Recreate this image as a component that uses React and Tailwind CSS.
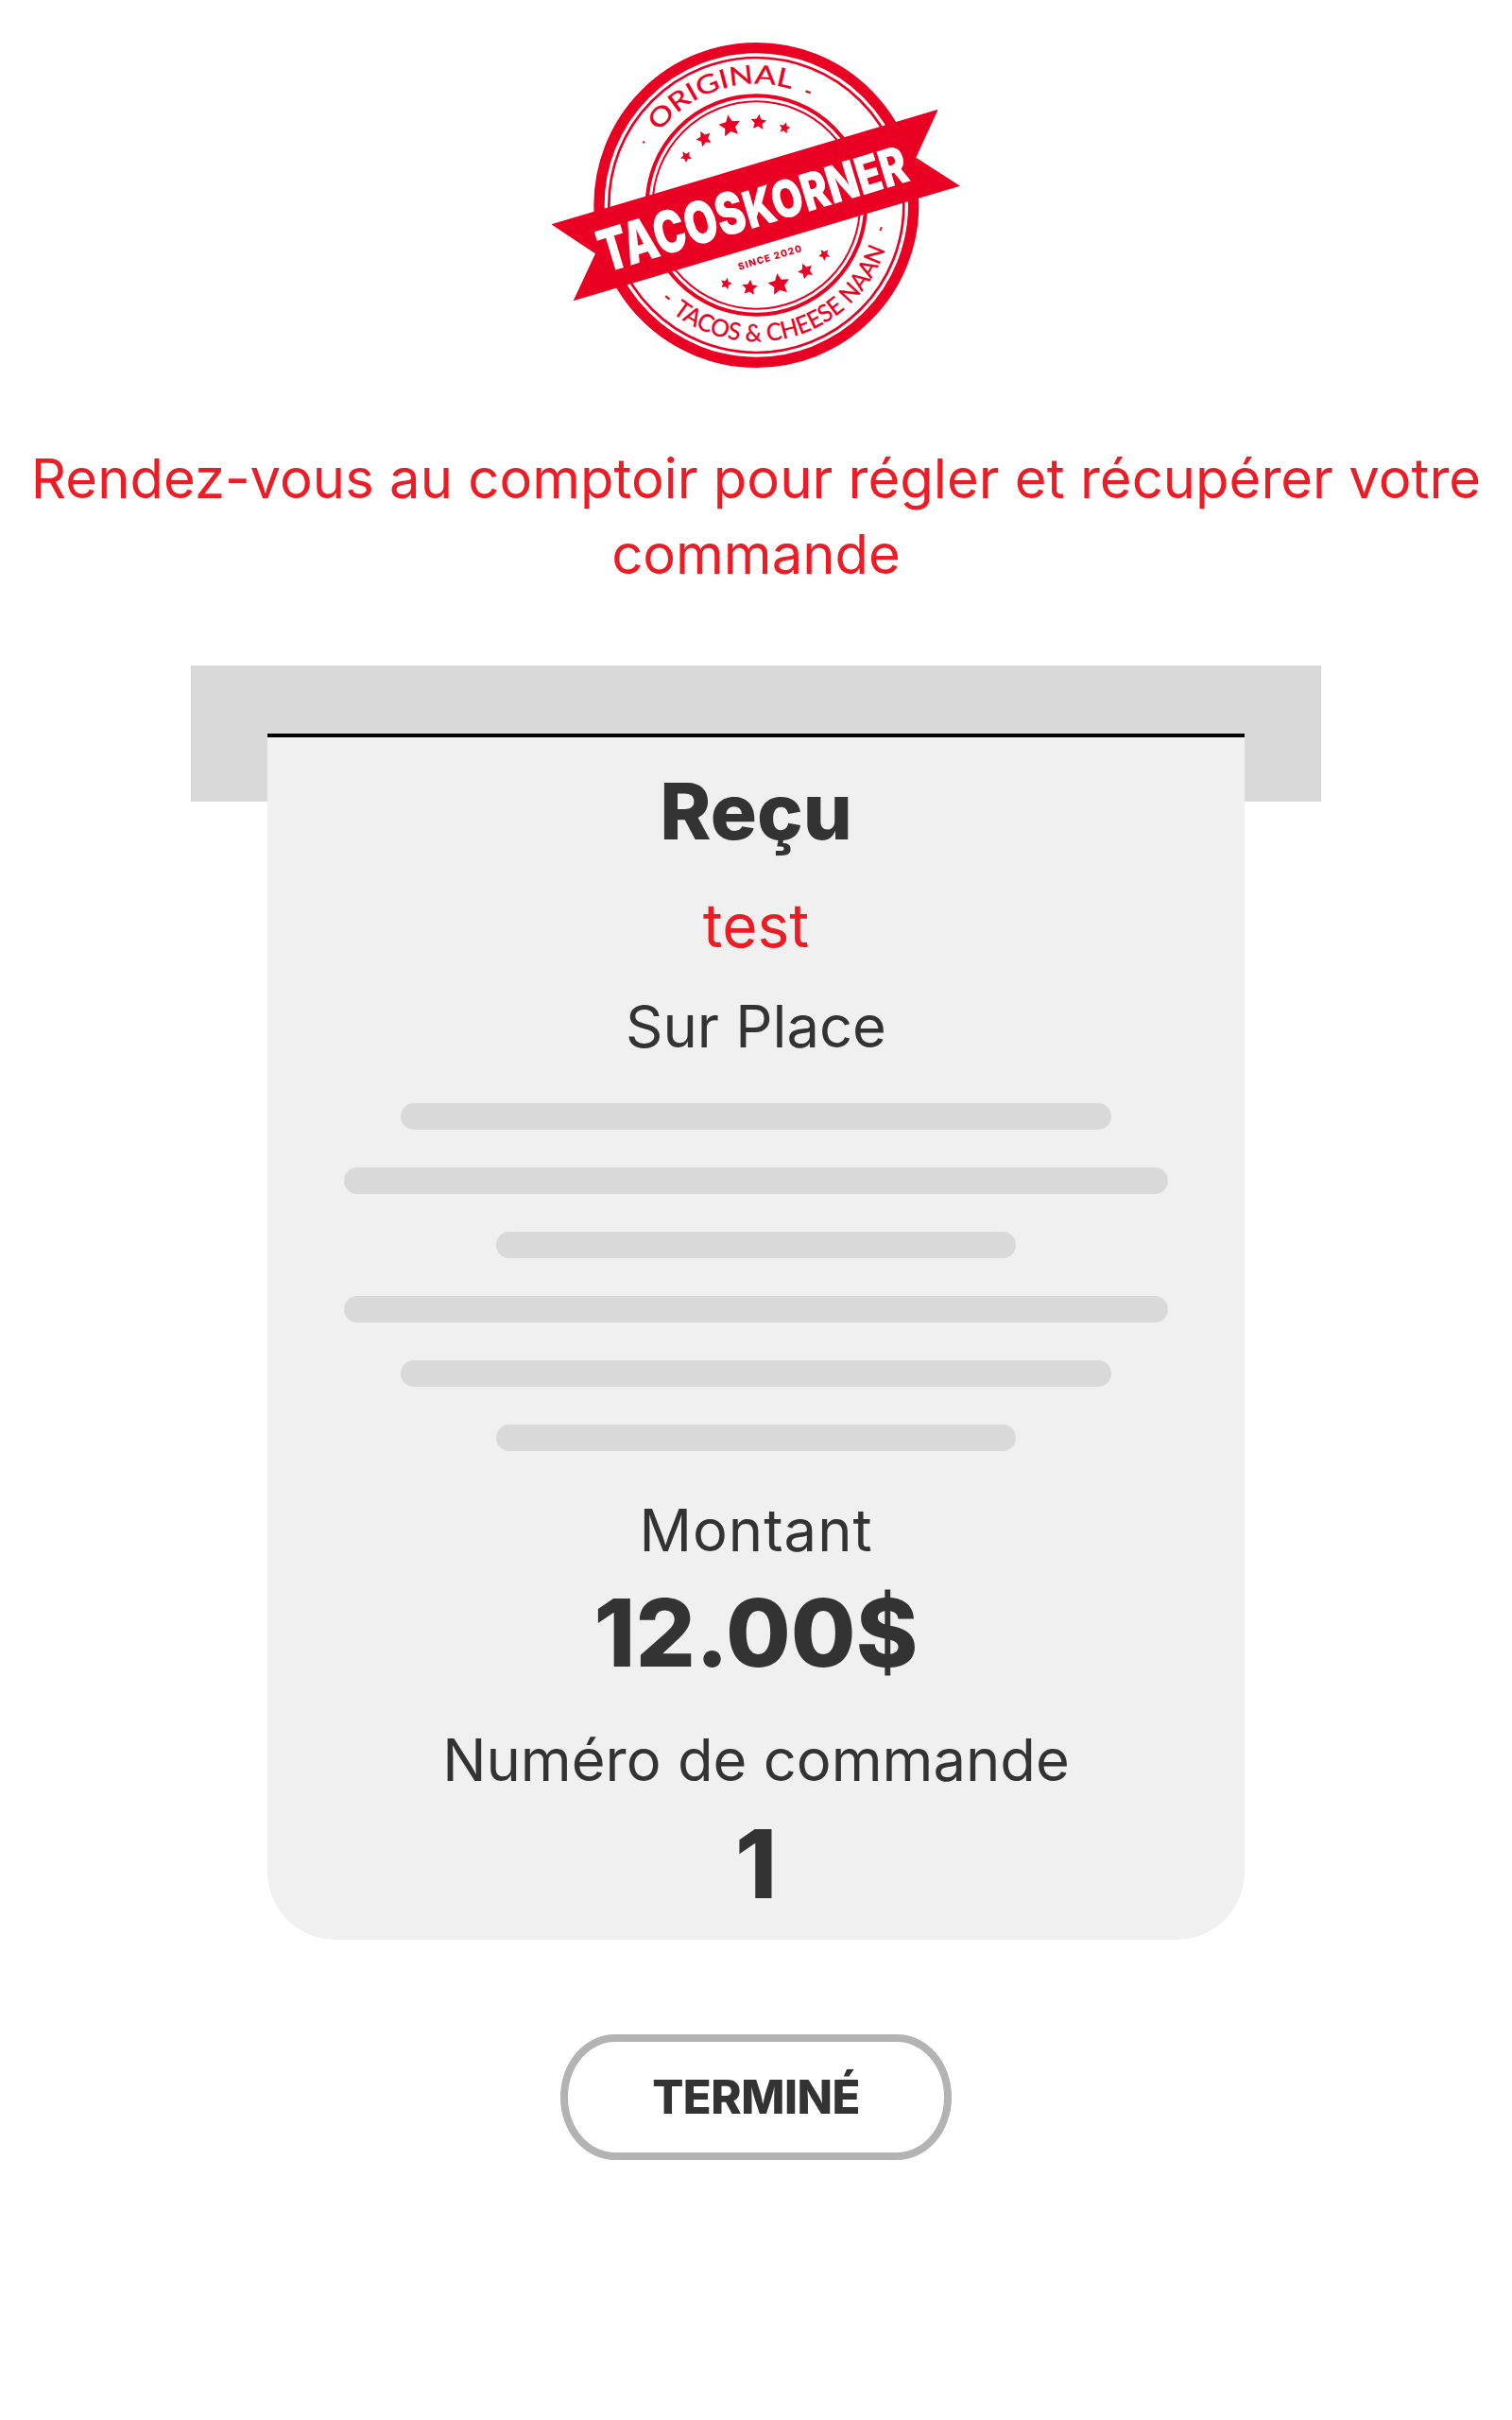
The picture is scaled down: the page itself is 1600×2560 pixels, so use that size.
const RED = "#ea0023";

function Star({ cx, cy, r, rot = 0 }) {
  const pts = [];
  for (let i = 0; i < 10; i++) {
    const rad = i % 2 === 0 ? r : r * 0.48;
    const a = ((rot + i * 36 - 90) * Math.PI) / 180;
    pts.push(`${(cx + rad * Math.cos(a)).toFixed(1)},${(cy + rad * Math.sin(a)).toFixed(1)}`);
  }
  return <polygon points={pts.join(" ")} fill={RED} />;
}

const stars = [
  [498, 437, 19, -35], [555, 380, 26, -25], [637, 340, 36, -10], [728, 328, 26, 5], [811, 346, 19, 15],
  [625, 840, 19, 15], [700, 853, 26, 5], [793, 843, 36, -10], [878, 800, 26, -25], [937, 748, 19, -35],
];

function Logo() {
  return (
    <svg viewBox="0 0 1440 1200" className="mt-5 block h-[400px] w-[480px] shrink-0">
      <circle cx="721" cy="591" r="499" fill="#fff" stroke={RED} strokeWidth="34" />
      <circle cx="721" cy="591" r="468" fill="none" stroke={RED} strokeWidth="8" />
      <circle cx="721" cy="591" r="347" fill="none" stroke={RED} strokeWidth="12" />
      <circle cx="721" cy="591" r="329" fill="none" stroke={RED} strokeWidth="6" />
      <defs>
        <path id="arcTop" d="M413.5 359.3 A385 385 0 0 1 968.5 296" />
        <path id="arcBottom" d="M454.4 932.2 A433 433 0 0 0 1132.8 724.8" />
      </defs>
      <text fill={RED} stroke={RED} strokeWidth="1" fontFamily="Lato, sans-serif" fontSize="82" fontWeight="400">
        <textPath href="#arcTop" textLength="468" lengthAdjust="spacingAndGlyphs">ORIGINAL</textPath>
      </text>
      <text fill={RED} stroke={RED} strokeWidth="1" fontFamily="Lato, sans-serif" fontSize="76" fontWeight="400">
        <textPath href="#arcBottom" textLength="825" lengthAdjust="spacingAndGlyphs">TACOS &amp; CHEESE NAAN</textPath>
      </text>
      <text transform="translate(868 246) rotate(20)" fill={RED} fontFamily="Lato, sans-serif" fontSize="64" fontWeight="700">-</text>
      <text transform="translate(418 892) rotate(40)" fill={RED} fontFamily="Lato, sans-serif" fontSize="64" fontWeight="700">-</text>
      <text transform="translate(1127 680) rotate(-70)" fill={RED} fontFamily="Lato, sans-serif" fontSize="50" fontWeight="700">-</text>
      <text transform="translate(372 405) rotate(-55)" fill={RED} fontFamily="Lato, sans-serif" fontSize="50">·</text>
      {stars.map(([cx, cy, r, rot]) => (
        <Star key={`${cx}-${cy}`} cx={cx} cy={cy} r={r} rot={rot} />
      ))}
      <text transform="translate(667 797) rotate(-16.6)" fill={RED} fontFamily="Inter, sans-serif" fontSize="30" fontWeight="800" textLength="208" lengthAdjust="spacing">SINCE  2020</text>
      <polygon points="70,652 1298,287 1228,440 1368,530 140,895 210,745" fill={RED} />
      <g transform="translate(242 806) rotate(-16.8)" fill="#fff" fontFamily="Inter, sans-serif" fontWeight="900">
        <text x="0" y="0" fontSize="186" textLength="478" lengthAdjust="spacingAndGlyphs">TACOS</text>
        <text x="480" y="0" fontSize="165" textLength="534" lengthAdjust="spacingAndGlyphs">KORNER</text>
      </g>
    </svg>
  );
}

function Bar({ className }) {
  return <div className={`h-7 rounded-[14px] bg-[#d9d9d9] ${className}`} />;
}

export default function App() {
  return (
    <div className="flex min-h-[2560px] w-full flex-col items-center bg-white font-[family-name:Inter] text-[#333333]">
      <Logo />
      <h1 className="mt-[46px] w-[1580px] text-center text-[58px] leading-[80px] font-normal text-[#ed1c24]">
        Rendez-vous au comptoir pour régler et récupérer votre commande
      </h1>
      <div className="mt-[78px] h-36 w-[1196px] shrink-0 bg-[#d9d9d9]" />
      <div className="relative -mt-[72px] flex h-[1276px] w-[1034px] flex-col items-center rounded-b-[72px] border-t-4 border-black bg-[#f0f0f0] pt-[30px]">
        <div className="text-[82px] leading-[97px] font-extrabold">Reçu</div>
        <div className="mt-[33px] text-[64px] leading-[77px] text-[#ed1c24]">test</div>
        <div className="mt-8 text-[61.5px] leading-[73px]">Sur Place</div>
        <div className="mt-[45px] flex flex-col items-center gap-10">
          <Bar className="w-[752px]" />
          <Bar className="w-[872px]" />
          <Bar className="w-[550px]" />
          <Bar className="w-[872px]" />
          <Bar className="w-[752px]" />
          <Bar className="w-[550px]" />
        </div>
        <div className="mt-[47px] text-[61.5px] leading-[73px] tracking-[1px]">Montant</div>
        <div className="mt-3 text-[99.5px] leading-[121px] font-extrabold">12.00$</div>
        <div className="mt-[37px] text-[61.5px] leading-[73px]">Numéro de commande</div>
        <div className="mt-[13px] text-[100px] leading-[121px] font-extrabold">1</div>
      </div>
      <button className="mt-[100px] flex h-[133px] w-[414px] items-center justify-center rounded-[58px/66px] border-8 border-[#b3b3b3] bg-white text-[49px] font-extrabold tracking-[-0.5px]">
        TERMINÉ
      </button>
    </div>
  );
}
